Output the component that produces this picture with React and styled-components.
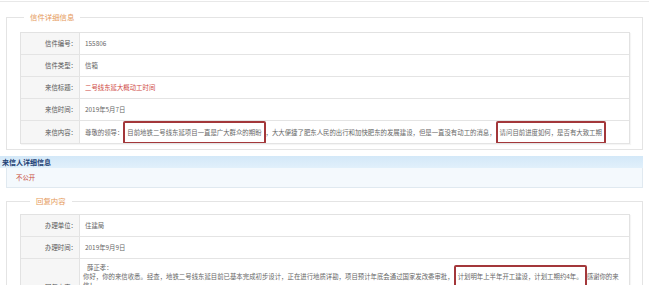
import React from 'react';
import styled, { createGlobalStyle } from 'styled-components';

const GlobalStyle = createGlobalStyle`
  html, body {
    margin: 0;
    padding: 0;
    overflow: hidden;
    background: #ffffff;
  }
  body {
    font-family: "Noto Sans CJK SC", "Noto Sans", sans-serif;
  }
`;

const letterRows = [
  { label: '信件编号', value: '155806' },
  { label: '信件类型', value: '信箱' },
  { label: '来信标题', value: '二号线东延大概动工时间', color: '#cf4b45' },
  { label: '来信时间', value: '2019年5月7日' },
];

const replyRows = [
  { label: '办理单位', value: '住建局' },
  { label: '办理时间', value: '2019年9月9日' },
];

const App = () => {
  return (
    <Page>
      <GlobalStyle />
      <Panel $pad="10px 12px 5px 13px">
        <Legend $offset={4}>信件详细信息</Legend>
        <Table>
          {letterRows.map((row) => (
            <Row key={row.label} $h={21}>
              <Label>{row.label}：</Label>
              <Value $color={row.color}>{row.value}</Value>
            </Row>
          ))}
          <Row $h={22}>
            <Label>来信内容：</Label>
            <Value>
              <Line>
                尊敬的领导：<Mark>目前地铁二号线东延项目一直是广大群众的期盼</Mark>，大大便捷了肥东人民的出行和加快肥东的发展建设，但是一直没有动工的消息，<Mark>请问目前进度如何，是否有大致工期</Mark>
              </Line>
            </Value>
          </Row>
        </Table>
      </Panel>

      <SectionBar>来信人详细信息</SectionBar>
      <SectionBody>不公开</SectionBody>

      <Panel $pad="8px 12px 5px 13px" $top={8}>
        <Legend $offset={10}>回复内容</Legend>
        <Table>
          {replyRows.map((row) => (
            <Row key={row.label} $h={21}>
              <Label>{row.label}：</Label>
              <Value>{row.value}</Value>
            </Row>
          ))}
          <Row $h={56}>
            <Label>回复内容：</Label>
            <Value $block>
              <Line $indent={4}>薛正孝：</Line>
              <Line>
                你好，你的来信收悉。经查，地铁二号线东延目前已基本完成初步设计，正在进行地质详勘，项目预计年底会通过国家发改委审批，<Mark>计划明年上半年开工建设，计划工期约4年。</Mark>感谢你的来
              </Line>
              <Line>信！</Line>
            </Value>
          </Row>
        </Table>
      </Panel>
    </Page>
  );
};

export default App;

const Page = styled.div`
  width: 649px;
  margin-top: 1px;
  border-top: 1px solid #e8e8e8;
  padding-top: 10px;
  font-size: 6.4px;
  color: #666;
`;

const Panel = styled.fieldset`
  margin: ${(p) => p.$top || 0}px 6px 0 6px;
  padding: ${(p) => p.$pad};
  border: 1px solid #e4e4e4;
  min-width: 0;
`;

const Legend = styled.legend`
  margin-left: ${(p) => p.$offset}px;
  padding: 0 6px;
  font-size: 7.4px;
  line-height: 10px;
  color: #e59a5c;
`;

const Table = styled.div`
  display: flex;
  flex-direction: column;
  border: 1px solid #e2e2e2;
  border-bottom: none;
  box-shadow: 1px 1px 1px rgba(0, 0, 0, 0.04);
`;

const Row = styled.div`
  display: grid;
  grid-template-columns: 59px 1fr;
  min-height: ${(p) => p.$h}px;
  border-bottom: 1px solid #e4e4e4;
`;

const Label = styled.div`
  display: flex;
  align-items: center;
  justify-content: flex-end;
  padding-right: 2px;
  background: #f6f6f6;
  border-right: 1px solid #e3e3e3;
  color: #555;
  white-space: nowrap;
`;

const Value = styled.div`
  display: flex;
  flex-direction: ${(p) => (p.$block ? 'column' : 'row')};
  justify-content: flex-start;
  align-items: ${(p) => (p.$block ? 'flex-start' : 'center')};
  padding: ${(p) => (p.$block ? '4px 0 4px 3px' : '0 0 0 5px')};
  color: ${(p) => p.$color || '#666'};
  overflow: hidden;
`;

const Line = styled.div`
  white-space: nowrap;
  line-height: 9px;
  padding-left: ${(p) => p.$indent || 0}px;
`;

const Mark = styled.span`
  padding: 5px 2px;
  border: 2px solid #a3373a;
  border-radius: 2px;
`;

const SectionBar = styled.div`
  margin: 6px 6px 0 0;
  height: 12px;
  line-height: 12px;
  padding-left: 2px;
  background: linear-gradient(#d3e8f8, #e1f0fb);
  color: #1d3f74;
  font-size: 7px;
  font-weight: bold;
`;

const SectionBody = styled.div`
  margin: 0 6px;
  height: 19px;
  line-height: 19px;
  padding-left: 9px;
  background: #f4f9fd;
  border: 1px solid #e0e9f0;
  border-top: none;
  color: #c84a3a;
`;
